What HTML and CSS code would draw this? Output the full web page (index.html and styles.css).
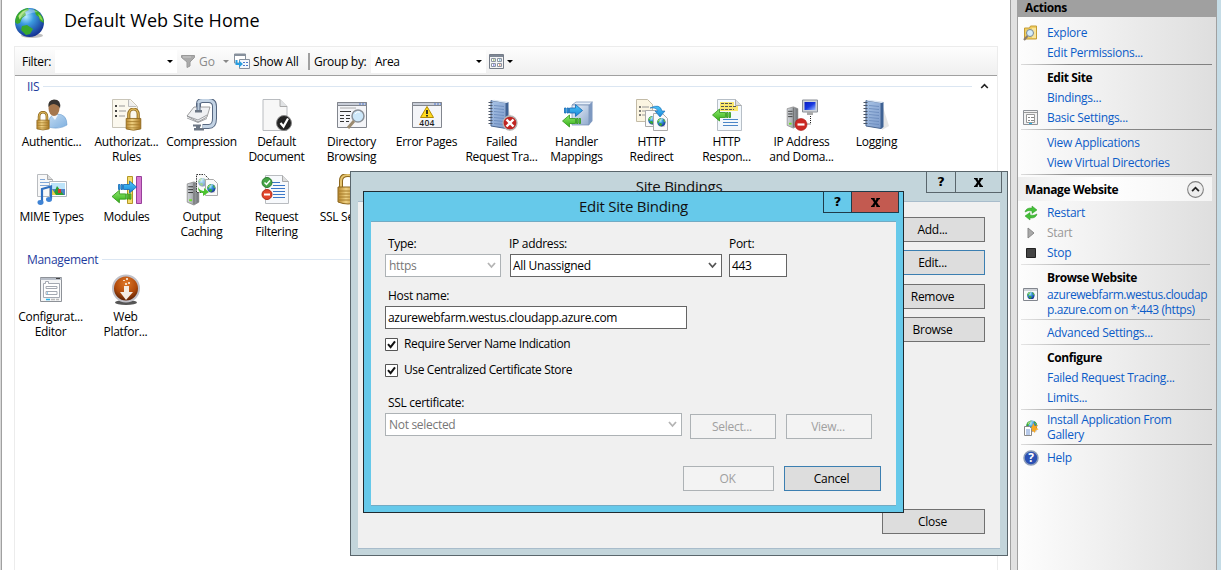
FILE: index.html
```html
<!DOCTYPE html>
<html lang="en">
<head>
<meta charset="utf-8">
<title>Default Web Site Home</title>
<link rel="stylesheet" href="styles.css">
</head>
<body>
<svg class="defs" width="0" height="0">
  <defs>
    <radialGradient id="sea" cx=".38" cy=".3" r=".75"><stop offset="0" stop-color="#b8ecff"/><stop offset=".35" stop-color="#3c9be0"/><stop offset="1" stop-color="#10298c"/></radialGradient>
    <linearGradient id="gold" x2="1"><stop offset="0" stop-color="#b8862c"/><stop offset=".4" stop-color="#f0d284"/><stop offset="1" stop-color="#a87420"/></linearGradient>
    <linearGradient id="steel" x2="1"><stop offset="0" stop-color="#d4d8dc"/><stop offset=".5" stop-color="#a8acb0"/><stop offset="1" stop-color="#6c7074"/></linearGradient>
    <linearGradient id="book" x2="1" y2="1"><stop offset="0" stop-color="#a9c4e6"/><stop offset="1" stop-color="#7c9aca"/></linearGradient>
    <linearGradient id="box" x2="1" y2="1"><stop offset="0" stop-color="#f0f5fb"/><stop offset="1" stop-color="#8fa9ce"/></linearGradient>
    <linearGradient id="shirt" x2="1" y2="1"><stop offset="0" stop-color="#c4dcf2"/><stop offset="1" stop-color="#7fb0e0"/></linearGradient>
    <radialGradient id="orange" cx=".5" cy=".3" r=".7"><stop offset="0" stop-color="#e07828"/><stop offset=".6" stop-color="#b04a0c"/><stop offset="1" stop-color="#4c1a04"/></radialGradient>
    <linearGradient id="lime" y2="1" x2="0"><stop offset="0" stop-color="#8fe870"/><stop offset="1" stop-color="#35b016"/></linearGradient>
    <linearGradient id="azure" y2="1" x2="0"><stop offset="0" stop-color="#4cc6f8"/><stop offset="1" stop-color="#1a86d8"/></linearGradient>
    <linearGradient id="screen" x2="1" y2="1"><stop offset="0" stop-color="#0a1cc0"/><stop offset=".5" stop-color="#1838e0"/><stop offset="1" stop-color="#a0c0ff"/></linearGradient>
    <symbol id="globe" viewBox="0 0 32 32"><ellipse cx="18" cy="28.500" rx="11" ry="2.500" fill="#000" opacity=".25"/><circle cx="15.500" cy="15.500" r="14.500" fill="url(#sea)"/><path d="M2 10C4 5 8 2 14 1l1 2-4 2 1 3-4 3-2 5-3 1-2-2zM20 2l5 3 4 6 1 5-4-2-1-4-3-2zM8 19l5-1 6 4-3 5-4 1-5-5z" fill="#3aa82c"/><path d="M4 9l5-5 4-1-5 5-2 5zM24 7l3 2 2 5-3-2z" fill="#8ad850"/><path d="M5 8Q13-2 24 5 13 6 5 12z" fill="#fff" opacity=".35"/></symbol>
    <symbol id="lock" viewBox="0 0 16 22"><path d="M3.500 11V6a4 4.500 0 0 1 9 0v5" fill="none" stroke="#8c661c" stroke-width="3"/><path d="M3.500 11V6a4 4.500 0 0 1 9 0v5" fill="none" stroke="#dcb65a" stroke-width="1.300"/><path d="M1 10h14v10q-7 2.500-14 0z" fill="url(#gold)" stroke="#8c661c" stroke-width=".8"/><path d="M1 13h14M1 16h14M1 19h14" stroke="#a47b2a" stroke-width=".8"/></symbol>
    <symbol id="page" viewBox="0 0 26 32"><path d="M1 .5h17l7 7v24H1z" fill="#f7f7f7" stroke="#b9bcc0"/><path d="M18 .5v7h7" fill="#e1e3e5" stroke="#aaa"/></symbol>
    <symbol id="notebook" viewBox="0 0 32 32"><path d="M22 8l6 19-7 4z" fill="#999" opacity=".25"/><path d="M5 1.500l15 2v26L5 27z" fill="url(#book)" stroke="#49658f"/><path d="M20 4l2.500-1v25L20 30z" fill="#3f6294"/><path d="M5 1.500l3-.8 14.500 2L20 4z" fill="#dfe9f5"/><path d="M8 6.500l10 1M8 9.500l10 1M8 12.500l10 1M8 15.500l10 1M8 18.500l10 1M8 21.500l10 1M8 24.500l10 1" stroke="#6788ba" stroke-width=".8"/><path d="M2.500 3.500h4M2.500 6.500h4M2.500 9.500h4M2.500 12.500h4M2.500 15.500h4M2.500 18.500h4M2.500 21.500h4M2.500 24.500h4" stroke="#4a5566"/></symbol>
    <symbol id="right" viewBox="0 0 20 14"><path d="M1 4.500h1.500v5H1zM3.500 4.500H5v5H3.500zM6 4.500h6V1l7 6-7 6V9.500H6z" fill="url(#azure)" stroke="#1467b4" stroke-width=".8"/></symbol>
    <symbol id="left" viewBox="0 0 20 14"><path d="M19 4.500h-1.500v5H19zM16.500 4.500H15v5h1.500zM14 4.500H8V1L1 7l7 6V9.500h6z" fill="url(#lime)" stroke="#2f9618" stroke-width=".8"/></symbol>
    <symbol id="tower" viewBox="0 0 14 26"><path d="M1 3l7-2 5 2v19l-5 3-7-3z" fill="url(#steel)" stroke="#777" stroke-width=".7"/><path d="M8 2v22" stroke="#666"/><path d="M2 6h5M2 9h5M2 12h5" stroke="#333"/><path d="M3 19h3v2H3z" fill="#6fe02a"/></symbol>
    <symbol id="window" viewBox="0 0 32 28"><path d="M1.500 1.500h29v25h-29z" fill="#f4f5f8" stroke="#82868e"/><path d="M1.500 1.500h29v3h-29z" fill="#c9ced8" stroke="#82868e"/><path d="M23 3h2M26 3h2M29 3h1" stroke="#4c76d0"/></symbol>
    <symbol id="xmark" viewBox="0 0 9 9"><path d="M0 0h3.700v1.200L4.500 2.700l.8-1.500V0H9v1.200H8L6 4.400 8.100 7.800H9V9H5.300V7.800L4.500 6.300l-.8 1.500V9H0V7.800h.9L3 4.400 1 1.200H0z"/></symbol>
  </defs>
</svg>

<div class="app">
  <main class="main">
    <header class="title-row">
      <svg class="title-icon" viewBox="0 0 32 32"><use href="#globe"/></svg>
      <h1 class="title">Default Web Site Home</h1>
    </header>
    <section class="feature-view">
      <div class="toolbar">
        <span class="tb-label">Filter:</span>
        <span class="tb-combo tb-filter"><i class="tri"></i></span>
        <svg class="tb-funnel" viewBox="0 0 14 14"><path d="M.5 1.500h13v2L9 8v4l-3 1.500V8L.5 3.500z" fill="#aaa" stroke="#999"/><path d="M2 3h8" stroke="#ccc"/></svg>
        <span class="tb-go">Go</span><i class="tri dim"></i>
        <svg class="tb-all" viewBox="0 0 16 16"><path d="M.5 1h11v9H.5z" fill="#fff" stroke="#87909c"/><path d="M.5 2h11" stroke="#87909c" stroke-width="2"/><path d="M5.500 6.500h10v9h-10z" fill="#f3f7fc" stroke="#87909c"/><path d="M9 9.500h2M12 9.500h2M9 12.500h2M12 12.500h2" stroke="#4b79c8"/><path d="M1.500 7v5H5v2.500L9 11 5 7.500V10H3.500V7z" fill="#2a9ee0"/></svg>
        <span class="tb-show">Show All</span>
        <i class="tb-sep"></i>
        <span class="tb-group">Group by:</span>
        <span class="tb-combo tb-area">Area<i class="tri"></i></span>
        <svg class="tb-view" viewBox="0 0 15 15"><path d="M.5.5h14v14H.5z" fill="#f5f5f5" stroke="#757c88"/><path d="M1 2h13" stroke="#7e8795" stroke-width="2"/><path d="M2.500 4.500h4v3h-4zM8.500 4.500h4v3h-4zM2.500 9.500h4v3h-4zM8.500 9.500h4v3h-4z" fill="#fff" stroke="#8c94a2"/><path d="M4 6h1.500" stroke="#6a9c20"/><path d="M10 6h1.500" stroke="#2a8cb8"/><path d="M4 11h1.500" stroke="#3838d8"/><path d="M10 11h1.500" stroke="#d85820"/></svg>
        <i class="tri"></i>
      </div>

      <div class="group-head"><span>IIS</span><i class="rule"></i><svg class="chev" viewBox="0 0 8 6"><path d="M.7 5L4 1.700 7.300 5" fill="none" stroke="#222" stroke-width="1.600"/></svg></div>
      <div class="grid">
        <div class="item"><svg viewBox="0 0 32 32"><path d="M12 28q0-13 9-13 10 0 10 11-8 5-19 2z" fill="url(#shirt)" stroke="#6f9fd0" stroke-width=".6"/><path d="M15 16l4 5 3-5z" fill="#f2f6fa"/><ellipse cx="18" cy="9" rx="5.500" ry="8" fill="#a5774e"/><path d="M12.500 8q-1-7 5.500-7.500 7.500 0 6 9Q23 6 18 5q-3.500 0-5.500 3z" fill="#363330"/><use href="#lock" x="0" y="12" width="14" height="20"/></svg><span>Authentic...</span></div>
        <div class="item"><svg viewBox="0 0 32 32"><path d="M1.500.5h18l7 7v21h-25z" fill="#fbf8ee" stroke="#c9c5b8"/><path d="M17.500.5v7h8" fill="#eee" stroke="#bbb"/><path d="M4 7h2M4 12h2M4 17h2" stroke="#444" stroke-width="2"/><path d="M8 7h6M8 12h7M8 17h6" stroke="#999"/><use href="#lock" x="14" y="9" width="17" height="23"/></svg><span>Authorizat... Rules</span></div>
        <div class="item"><svg viewBox="0 0 32 32"><path d="M12.500 9V5q0-3.500 4-3.500h6q6 0 6 6v12q0 8-6 8h-6" fill="none" stroke="#566780" stroke-width="5"/><path d="M12.500 9V5q0-3.500 4-3.500h6q6 0 6 6v12q0 8-6 8h-6" fill="none" stroke="#c3d3e4" stroke-width="3"/><path d="M1 17l7-9h16l-3 10-9 5z" fill="#f0f1f3" stroke="#888" stroke-width=".8"/><path d="M1 19l11 4.500 9-4M1 17l11 4 9-5" fill="none" stroke="#8a8d92" stroke-width=".8"/><path d="M12.500 4v8" stroke="#566780" stroke-width="4"/><path d="M12.500 4v8" stroke="#b9cadc" stroke-width="2"/><path d="M9 11h7v2.500H9z" fill="#6c7684"/><path d="M7 25.500h8v2H7zM8 29h10v2.500H8zM10 27h4v3h-4z" fill="#6c7684"/></svg><span>Compression</span></div>
        <div class="item"><svg viewBox="0 0 32 32"><use href="#page" x="1" y="0" width="26" height="32"/><circle cx="23" cy="24" r="7.500" fill="#222" stroke="#888"/><path d="M19.500 24l3 3.500 4.500-8" fill="none" stroke="#fff" stroke-width="2.200"/></svg><span>Default Document</span></div>
        <div class="item"><svg viewBox="0 0 32 32"><use href="#window" x="0" y="2" width="32" height="28"/><path d="M4 9h16" stroke="#aaa"/><path d="M4 12.500h11M4 16.500h4M10 16.500h4M4 19.500h4M10 19.500h4M4 22.500h4M10 22.500h3" stroke="#333"/><circle cx="22" cy="17" r="6" fill="#cde8fa" stroke="#8a9098" stroke-width="1.500"/><path d="M18 22l-6 7" stroke="#9b8b70" stroke-width="3"/><path d="M19 15q2-3 5-2" stroke="#fff" fill="none"/></svg><span>Directory Browsing</span></div>
        <div class="item"><svg viewBox="0 0 32 32"><use href="#window" x="0" y="2" width="32" height="28"/><path d="M16 7.500l6.500 11h-13z" fill="#ffd91c" stroke="#b28b00"/><path d="M16 11v4M16 16v1.500" stroke="#222" stroke-width="1.800"/><text x="16" y="26.500" text-anchor="middle" class="t404">404</text></svg><span>Error Pages</span></div>
        <div class="item"><svg viewBox="0 0 32 32"><use href="#notebook"/><circle cx="24" cy="24" r="7" fill="#c02420" stroke="#b4b4b4" stroke-width="1.300"/><path d="M20.500 20.500l7 7M27.500 20.500l-7 7" stroke="#fff" stroke-width="2.400"/></svg><span>Failed Request Tra...</span></div>
        <div class="item"><svg viewBox="0 0 32 32"><path d="M11 6l4-3h16.500L28 6z" fill="#e8f0fa" stroke="#7189b0" stroke-width=".7"/><path d="M11 6h17v20H11z" fill="url(#box)" stroke="#7189b0" stroke-width=".7"/><path d="M28 6l3.500-3v19L28 26z" fill="#7d98c0"/><use href="#right" x="2" y="4.500" width="21" height="14"/><use href="#left" x="0" y="15" width="21" height="14"/></svg><span>Handler Mappings</span></div>
        <div class="item"><svg viewBox="0 0 32 32"><path d="M.5.500h11l5 5v17H.5z" fill="#fbf5e2" stroke="#c3bba6"/><path d="M3 8h2M3 12h2M3 16h2" stroke="#555" stroke-width="1.500"/><path d="M6 8h7M6 12h4M6 16h3" stroke="#999"/><path d="M9.500 11.500h11v16h-11z" fill="#fafafa" stroke="#aaa"/><use href="#globe" x="12" y="17" width="9" height="9"/><path d="M17.500 14.500h9l5 5v12h-14z" fill="#fafafa" stroke="#aaa"/><use href="#globe" x="21" y="19" width="9" height="9"/><path d="M14 9q10-5 12 3h3l-5 6-5-6h3q-2-4-8-3z" fill="url(#azure)" stroke="#1467b4" stroke-width=".6"/></svg><span>HTTP Redirect</span></div>
        <div class="item"><svg viewBox="0 0 32 32"><path d="M6.500.5h18l6 6v25h-24z" fill="#f3f8fc" stroke="#b7bfc7"/><path d="M24.500.5v6h6" fill="#ddd" stroke="#aaa"/><path d="M9 3h14v4h4v5H9z" fill="#fbe66c"/><path d="M10 4.500h11M10 7.500h15M10 10.500h13" stroke="#555" stroke-dasharray="3 1"/><path d="M12 20.500h15M12 23.500h15M12 26.500h15" stroke="#4a86c8"/><use href="#left" x="0" y="9" width="21" height="14"/></svg><span>HTTP Respon...</span></div>
        <div class="item"><svg viewBox="0 0 32 32"><use href="#tower" x="0" y="7" width="13" height="23"/><path d="M16.500 1h15v12h-15z" fill="#cfd3d8" stroke="#8a8f96"/><path d="M18.500 3h11v8h-11z" fill="url(#screen)"/><path d="M21 13h6v3h-6z" fill="#aaa"/><path d="M24.500 17v8h-5" fill="none" stroke="#222" stroke-dasharray="1 1"/><circle cx="15" cy="25.500" r="6" fill="#cc2822" stroke="#a61a16" stroke-width=".6"/><path d="M11.500 25.500h7" stroke="#fff" stroke-width="2.200"/></svg><span>IP Address and Doma...</span></div>
        <div class="item"><svg viewBox="0 0 32 32"><use href="#notebook"/></svg><span>Logging</span></div>
        <div class="item"><svg viewBox="0 0 32 32"><path d="M1.500.5h10l5 5v17h-15z" fill="#f8f8f8" stroke="#b9bcc0"/><path d="M11.500.5v5h5" fill="#ddd" stroke="#aaa"/><path d="M4 5.500h5M4 8.500h9M4 11.500h9" stroke="#82a8d8"/><path d="M13.500 7.500h17v15h-17z" fill="#fff" stroke="#b0b6bd"/><path d="M15 9h14v6H15z" fill="#bde4fa"/><path d="M15 15h14v6H15z" fill="#4d7fc4"/><path d="M17 21l4-9 7 9z" fill="#2b9f33"/><path d="M16 15l4 6h-4z" fill="#f2d44c"/><path d="M22 15h3v4h-3z" fill="#d63c28"/><path d="M6 28V15l9-2.500V25" fill="none" stroke="#2f6fc0" stroke-width="2.200"/><ellipse cx="4.500" cy="28.500" rx="3" ry="2.400" fill="#3f83d4"/><ellipse cx="13" cy="25.500" rx="3" ry="2.400" fill="#3f83d4"/></svg><span>MIME Types</span></div>
        <div class="item"><svg viewBox="0 0 32 32"><path d="M16.500 2.500h5v27h-5z" fill="#f4dc6c" stroke="#b39726"/><path d="M25.500 2.500h5v27h-5z" fill="#d678d0" stroke="#97409a"/><use href="#right" x="6" y="6" width="21" height="14"/><use href="#left" x="0" y="15" width="21" height="15"/></svg><span>Modules</span></div>
        <div class="item"><svg viewBox="0 0 32 32"><use href="#tower" x="0" y="7" width="14" height="25"/><path d="M10.500 .5h8l4 4v14h-12z" fill="#fafafa" stroke="#333" stroke-dasharray="1.500 1"/><use href="#globe" x="12" y="4" width="9" height="9" opacity=".5"/><path d="M19.500 5.500h8l4 4v12h-12z" fill="#fafafa" stroke="#aaa"/><use href="#globe" x="21" y="10" width="9" height="9"/><path d="M12 13q2 4 6 4v-3l5 4-6 4v-3q-5 0-5-6z" fill="#4cc430"/></svg><span>Output Caching</span></div>
        <div class="item"><svg viewBox="0 0 32 32"><path d="M4.500 1.500h17l6 6v22h-23z" fill="#f7f9fc" stroke="#b9bcc0"/><path d="M21.500 1.500v6h6" fill="#ddd" stroke="#aaa"/><path d="M11 8.500h8M12 11.500h12M10 14.500h14M12 17.500h12M12 20.500h12M12 23.500h12" stroke="#3c78c8"/><circle cx="6" cy="8.500" r="5" fill="#46a546" stroke="#2a7a2e"/><path d="M3.500 8.500l2 2 3.500-4" fill="none" stroke="#fff" stroke-width="1.500"/><circle cx="6" cy="20.500" r="5" fill="#e2452c" stroke="#ae2a18"/><path d="M3 20.500h6" stroke="#fff" stroke-width="2"/></svg><span>Request Filtering</span></div>
        <div class="item"><svg viewBox="0 0 32 32"><path d="M5 14V7q0-6 7-6t7 6v7" fill="none" stroke="#8c661c" stroke-width="4"/><path d="M5 14V7q0-6 7-6t7 6v7" fill="none" stroke="#e4c470" stroke-width="2"/><path d="M2 13h20v15q-10 4-20 0z" fill="url(#gold)" stroke="#8c661c"/><path d="M2 17h20M2 20h20M2 23h20M2 26h20" stroke="#a47b2a"/></svg><span>SSL Settings</span></div>
      </div>

      <div class="group-head mgmt"><span>Management</span><i class="rule"></i></div>
      <div class="grid grid-mgmt">
        <div class="item"><svg viewBox="0 0 32 32"><path d="M5.500 3.500h21v24h-21z" fill="#f5f6f7" stroke="#8e9298"/><path d="M5.500 5h21" stroke="#b8bec8" stroke-width="2"/><path d="M21 4.500h4" stroke="#444"/><path d="M8.500 9.500h2v-2h3v2h11v14h-16z" fill="#fff" stroke="#a4a9b2"/><path d="M11 12.500h11v2H11zM11 17.500h11v3H11z" fill="#fff" stroke="#a4a9b2"/><path d="M12 19h1" stroke="#2a9ee0"/><path d="M11 25.500h4" stroke="#28b4e8" stroke-width="1.500"/><path d="M16 25.500h4M21 25.500h3" stroke="#bbb" stroke-width="1.500"/></svg><span>Configurat... Editor</span></div>
        <div class="item"><svg viewBox="0 0 32 32"><ellipse cx="16" cy="28.500" rx="11" ry="2.500" fill="#555"/><circle cx="16" cy="14.500" r="13" fill="url(#orange)" stroke="#c0c0c8" stroke-width="2"/><path d="M14 12h5v6h4l-7 8-6-8h4z" fill="#f4ece4"/><path d="M15 9h2v2h-2zM18 8h2v2h-2zM13 6h2v1h-2zM16 4h2v2h-2z" fill="#f4d8c0"/></svg><span>Web<br>Platfor...</span></div>
      </div>
    </section>
  </main>

  <aside class="actions">
    <h2 class="actions-head">Actions</h2>
    <div class="act"><svg viewBox="0 0 16 16"><path d="M1.500 3h5l1-2h6v13h-12z" fill="#f0ce62" stroke="#c49c34"/><path d="M9 3h4v10H9z" fill="#f8e59c"/><circle cx="7" cy="8" r="3.500" fill="#d4ecfa" stroke="#788898"/><path d="M4.500 11L1 15" stroke="#8a7c6c" stroke-width="2"/></svg><a>Explore</a></div>
    <div class="act"><a>Edit Permissions...</a></div>
    <i class="sep"></i>
    <div class="act"><b>Edit Site</b></div>
    <div class="act"><a>Bindings...</a></div>
    <div class="act"><svg viewBox="0 0 16 16"><path d="M.5.5h14v14H.5z" fill="#f2f2f2" stroke="#8e9298"/><path d="M1 2.500h13" stroke="#999"/><path d="M3.500 4.500h8v8h-8z" fill="#fff" stroke="#999"/><path d="M5 7.500h2M8 7.500h3M5 10.500h2M8 10.500h3" stroke="#888"/><path d="M6 13.500h3" stroke="#28b4e8"/></svg><a>Basic Settings...</a></div>
    <i class="sep"></i>
    <div class="act"><a>View Applications</a></div>
    <div class="act"><a>View Virtual Directories</a></div>
    <i class="sep"></i>
    <h3 class="manage">Manage Website<svg viewBox="0 0 16 16"><circle cx="8" cy="8" r="7.400" fill="#eee" stroke="#808080"/><path d="M4.800 9.500L8 6.300l3.200 3.200" fill="none" stroke="#222" stroke-width="1.700"/></svg></h3>
    <div class="act"><svg viewBox="0 0 16 16"><path d="M2 7q1-4.500 7-4V1l5 4-5 3.500V6Q5 5 2 7zM14 9q-1 4.500-7 4v2l-5-4 5-3.500V10q4 1 7-1z" fill="#44c038" stroke="#2c9424" stroke-width=".5"/></svg><a>Restart</a></div>
    <div class="act off"><svg viewBox="0 0 16 16"><path d="M5 3l6 5-6 5z" fill="#aaa" stroke="#888"/></svg><a>Start</a></div>
    <div class="act"><svg viewBox="0 0 16 16"><path d="M3.500 3.500h9v9h-9z" fill="#444" stroke="#222"/></svg><a>Stop</a></div>
    <i class="sep light"></i>
    <div class="act"><b>Browse Website</b></div>
    <div class="act two"><svg viewBox="0 0 16 16"><path d="M.5.500h14v12H.5z" fill="#fafafa" stroke="#82868e"/><path d="M1 2h13" stroke="#a8aeb8"/><use href="#globe" x="4" y="3.500" width="8" height="8"/></svg><a class="url">azurewebfarm.westus.cloudap<br>p.azure.com on *:443 (https)</a></div>
    <i class="sep light"></i>
    <div class="act"><a>Advanced Settings...</a></div>
    <i class="sep light"></i>
    <div class="act"><b>Configure</b></div>
    <div class="act"><a>Failed Request Tracing...</a></div>
    <div class="act"><a>Limits...</a></div>
    <i class="sep"></i>
    <div class="act two mid"><svg viewBox="0 0 16 16"><use href="#globe" x="3" y="0" width="12" height="12"/><path d="M10.500 3l1.200 3 3-1-1.200 2.600 2 1.900-3 .6-.5 3-2-2-2.500 1.500.6-3-2.600-1.600 3-.8z" fill="#f8a820"/><path d="M1.500 6.500h5l2 2v7h-7z" fill="#fff" stroke="#888"/><path d="M3 10h4M3 12h4M3 14h4" stroke="#4b79c8" stroke-width=".8"/></svg><a>Install Application From<br>Gallery</a></div>
    <i class="sep"></i>
    <div class="act"><svg viewBox="0 0 16 16"><circle cx="8" cy="8" r="7" fill="#2a50b4" stroke="#8c9cb8" stroke-width="1.500"/><text x="8" y="12.300" text-anchor="middle" class="q">?</text></svg><a>Help</a></div>
  </aside>

  <div class="dlg bindings">
    <div class="dlg-title">Site Bindings</div>
    <div class="caption"><span>?</span><span class="cx"><svg><use href="#xmark"/></svg></span></div>
    <div class="dlg-body">
      <div class="stack">
        <button class="btn">Add...</button>
        <button class="btn focus">Edit...</button>
        <button class="btn gap">Remove</button>
        <button class="btn">Browse</button>
      </div>
      <button class="btn close">Close</button>
    </div>
  </div>

  <div class="dlg edit">
    <div class="dlg-title">Edit Site Binding</div>
    <div class="caption"><span>?</span><span class="cx"><svg><use href="#xmark"/></svg></span></div>
    <div class="dlg-body">
      <div class="fields">
        <label class="f-type">Type:<span class="box off">https<svg class="dd" viewBox="0 0 9 7"><path d="M1 1l3.500 4L8 1"/></svg></span></label>
        <label class="f-ip">IP address:<span class="box">All Unassigned<svg class="dd" viewBox="0 0 9 7"><path d="M1 1l3.500 4L8 1"/></svg></span></label>
        <label class="f-port">Port:<span class="box">443</span></label>
      </div>
      <label class="f-host">Host name:<span class="box">azurewebfarm.westus.cloudapp.azure.com</span></label>
      <div class="check"><svg viewBox="0 0 13 13"><path d="M.5.5h12v12H.5z" fill="#fff" stroke="#555"/><path d="M3 6.200l2.600 3L10 3.300" fill="none" stroke="#111" stroke-width="2"/></svg><span>Require Server Name Indication</span></div>
      <div class="check"><svg viewBox="0 0 13 13"><path d="M.5.5h12v12H.5z" fill="#fff" stroke="#555"/><path d="M3 6.200l2.600 3L10 3.300" fill="none" stroke="#111" stroke-width="2"/></svg><span>Use Centralized Certificate Store</span></div>
      <div class="ssl-row">
        <label class="f-ssl">SSL certificate:<span class="box off">Not selected<svg class="dd" viewBox="0 0 9 7"><path d="M1 1l3.500 4L8 1"/></svg></span></label>
        <button class="btn disabled">Select...</button>
        <button class="btn disabled">View...</button>
      </div>
      <div class="footer">
        <button class="btn disabled ok">OK</button>
        <button class="btn focus cancel">Cancel</button>
      </div>
    </div>
  </div>
</div>
</body>
</html>
```
FILE: styles.css
```css
* { box-sizing: border-box; }
body { margin: 0; font: 12px/15px "Open Sans", "Noto Sans", sans-serif; letter-spacing: -0.3px; color: #000; }
i { font-style: normal; display: block; flex: none; }
h1, h2, h3 { margin: 0; font-weight: 400; }
svg { flex: none; display: block; }
.defs { position: absolute; }
.app { position: relative; width: 1221px; height: 570px; overflow: hidden; display: flex; background: #c5dce6; }

.main { width: 1011px; background: #fff; border-left: 1px solid #d8d8d8; border-right: 1px solid #a0a0a0; box-shadow: inset 1px 0 #a0a0a0; padding: 0 12px 0 13px; display: flex; flex-direction: column; }
.title-row { height: 46px; display: flex; align-items: flex-start; padding-top: 7px; }
.title-icon { width: 32px; height: 32px; }
.title { font-size: 18px; line-height: 26px; margin-left: 18px; white-space: nowrap; letter-spacing: 0.04px; }
.feature-view { flex: 1; width: 984px; border: 1px solid #ececec; border-bottom: 0; }
.toolbar { height: 29px; display: flex; align-items: center; background: linear-gradient(#fdfdfd, #efefef); border-bottom: 1px solid #a0a0a0; padding-left: 7px; white-space: nowrap; }
.tb-label { width: 33px; }
.tb-combo { background: #fff; height: 23px; display: flex; align-items: center; justify-content: flex-end; padding-right: 4px; }
.tb-filter { width: 122px; }
.tb-area { width: 115px; justify-content: space-between; padding-left: 4px; }
.tri { border: 3px solid transparent; border-top-color: #000; border-bottom: 0; width: 6px; height: 3px; }
.tri.dim { border-top-color: #888; margin-left: 10px; }
.tb-funnel { width: 14px; height: 14px; margin-left: 4px; }
.tb-go { color: #8a8a8a; margin-left: 4px; width: 14px; letter-spacing: 0; }
.tb-all { width: 16px; height: 16px; margin-left: 5px; }
.tb-show { margin-left: 3px; width: 48px; letter-spacing: -0.2px; }
.tb-sep { width: 2px; height: 17px; background: #a0a0a0; margin: 0 4px 0 7px; }
.tb-group { width: 57px; }
.tb-view { width: 15px; height: 15px; margin: 0 3px; }

.group-head { display: flex; align-items: center; height: 20px; padding: 0 8px 0 12px; color: #1e3c9e; }
.rule { flex: 1; height: 1px; background: #dbe6f2; margin-left: 4px; margin-right: 8px; }
.chev { width: 9px; height: 6px; }
.grid { display: grid; grid-template-columns: repeat(12, 75px); grid-auto-rows: 75px; padding-top: 3px; height: 154px; margin-left: -1px; }
.item { display: flex; flex-direction: column; align-items: center; text-align: center; }
.item svg { width: 32px; height: 32px; margin-bottom: 3px; }
.item span { padding: 0 1px; max-width: 75px; }
.t404 { font: 600 8.500px "Open Sans", sans-serif; fill: #222; letter-spacing: 0.3px; }
.mgmt { height: 19px; }
.grid-mgmt { padding-top: 5px; height: auto; margin-left: -2px; }

.actions { margin-left: 6px; width: 200px; border: 1px solid #a0a0a0; border-width: 0 1px; background: linear-gradient(90deg, #fdfdfd, #dedede); box-shadow: -6px 0 #e1e1e1; white-space: nowrap; }
.actions-head { height: 17px; background: #a0a0a0; font-size: 12px; font-weight: 700; line-height: 15px; padding-left: 7px; margin-bottom: 6px; letter-spacing: -0.4px; }
.act { height: 20px; display: flex; align-items: center; padding-left: 29px; color: #0c5cc8; }
.act svg { width: 16px; height: 16px; margin: 0 8px 0 -24px; }
.act a, .act b { padding-bottom: 2px; }
.act b { color: #000; letter-spacing: -0.4px; }
.act .url { letter-spacing: -0.42px; }
.act.two { height: 30px; align-items: flex-start; }
.act.two a { margin-top: -1px; }
.act.mid { align-items: center; }
.act.off { color: #999; }
.sep { height: 1px; margin: 1px 4px 3px 3px; background: linear-gradient(90deg, #ddd, #8a8a8a 25%, #808080); }
.sep.light { background: linear-gradient(90deg, #e5e5e5, #b4b4b4 25%, #b0b0b0); margin-right: 6px; }
.manage { height: 24px; margin: -1px 4px 2px 0; padding: 0 8px 0 7px; background: linear-gradient(90deg, #eee, #fff 40%, #f4f4f4); font-size: 12px; font-weight: 700; letter-spacing: -0.4px; display: flex; align-items: center; justify-content: space-between; }
.manage svg { width: 17px; height: 17px; }
.q { font: bold 12px "Open Sans", sans-serif; fill: #fff; }

.dlg { position: absolute; }
.dlg-title { height: 29px; text-align: center; font-size: 15px; line-height: 29px; letter-spacing: -0.25px; color: #111; }
.caption { position: absolute; top: -1px; display: flex; height: 22px; border: 1px solid #3c4850; font: bold 13px/20px "DejaVu Sans", sans-serif; letter-spacing: 0; color: #000; text-align: center; }
.caption span { width: 28px; }
.caption .cx { width: 46px; border-left: 1px solid #3c4850; display: flex; align-items: center; justify-content: center; }
.cx svg { width: 9px; height: 9px; }
.dlg-body { background: #f0f0f0; margin: 0 7px; border-top: 1px solid #a8bccb; border-bottom: 1px solid #a8bccb; }
.bindings { left: 350px; top: 171px; width: 658px; height: 385px; background: #c3d5db; border: 1px solid #5a666c; }
.bindings .caption { left: 575px; border-color: #5a666c; }
.bindings .cx { border-color: #5a666c; }
.bindings .dlg-body { height: 348px; padding: 15px 15px 14px; display: flex; flex-direction: column; justify-content: space-between; align-items: flex-end; }
.stack { display: flex; flex-direction: column; gap: 8px; }
.stack .gap { margin-top: 1px; }
.edit { left: 363px; top: 191px; width: 541px; height: 322px; background: #66c9ea; border: 1px solid #1f2b31; }
.edit .caption { left: 459px; border-color: #1f3b4a; }
.edit .caption span { width: 27px; }
.edit .caption .cx { width: 47px; background: #c35a50; border-color: #1f3b4a; }
.edit .dlg-body { height: 285px; padding: 14px 15px 15px 14px; border-color: #72abc4; }

.btn { width: 103px; height: 25px; padding: 0 2px 1px 0; font: inherit; letter-spacing: inherit; color: #000; background: #ddd; border: 1px solid #707070; border-radius: 0; white-space: nowrap; }
.btn.focus { border-color: #3c7fb1; }
.btn.disabled { background: #f3f3f3; border-color: #adb2b5; color: #a0a0a0; }
label { display: flex; flex-direction: column; text-indent: 3px; white-space: nowrap; }
.box { height: 23px; margin-top: 3px; border: 1px solid #646464; background: #fff; display: flex; justify-content: space-between; align-items: center; padding: 0 4px 1px 0; text-indent: 2px; }
.box.off { border-color: #adb2b5; color: #777; text-indent: 3px; }
.dd { width: 9px; height: 7px; fill: none; stroke: #555; stroke-width: 1.8; }
.off .dd { stroke: #b4b4b4; }
.fields { display: flex; }
.f-type { width: 116px; }
.f-ip { width: 212px; margin-left: 9px; text-indent: -1px; }
.f-port { width: 58px; margin-left: 7px; text-indent: 0; }
.f-host { width: 302px; margin-top: 11px; }
.check { display: flex; align-items: center; height: 26px; letter-spacing: -0.38px; }
.f-host + .check { margin-top: 2px; }
.check svg { width: 13px; height: 13px; margin-right: 6px; }
.check span { padding-bottom: 1px; }
.ssl-row { display: flex; align-items: flex-end; margin-top: 12px; }
.f-ssl { width: 297px; margin-bottom: 3px; }
.ssl-row .btn { width: 86px; margin-left: 8px; }
.ssl-row .btn + .btn { margin-left: 10px; }
.footer { display: flex; justify-content: flex-end; gap: 10px; margin-top: 27px; }
.ok { width: 91px; }
.cancel { width: 97px; }
```
